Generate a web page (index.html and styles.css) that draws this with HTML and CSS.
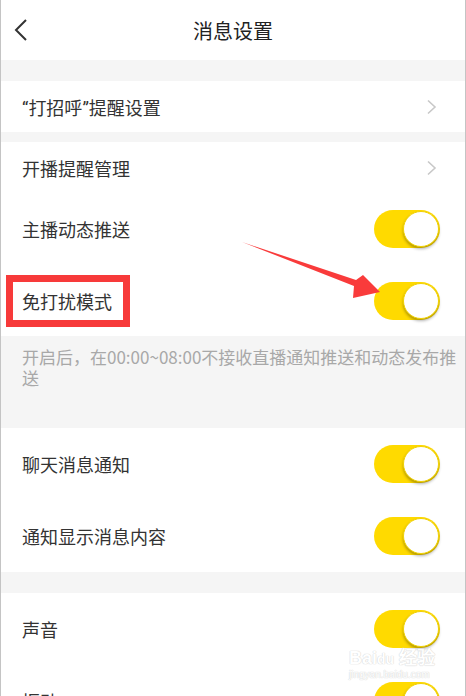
FILE: index.html
```html
<!DOCTYPE html>
<html lang="zh-CN">
<head>
  <meta charset="UTF-8" />
  <meta name="viewport" content="width=device-width, initial-scale=1.0"/>
  <title>消息设置</title>
  <link rel="stylesheet" href="styles.css">
</head>
<body>

  <div class="page">
    <div class="top-bar">
      <svg class="back" width="14" height="24" viewBox="0 0 14 24">
        <polyline points="12,2 2,12 12,22" fill="none" stroke="#333" stroke-width="2"/>
      </svg>
      <h1>消息设置</h1>
    </div>

    <div class="gap gap-top"></div>

    <div class="row row-link">
      <span><span class="q">“</span>打招呼<span class="q">”</span>提醒设置</span>
      <svg class="arrow-right" width="11" height="16" viewBox="0 0 11 16">
        <polyline points="2,1.5 9,8 2,14.5" fill="none" stroke="#c8c8c8" stroke-width="1.6"/>
      </svg>
    </div>

    <div class="gap gap-small"></div>

    <div class="row row-link">
      <span>开播提醒管理</span>
      <svg class="arrow-right" width="11" height="16" viewBox="0 0 11 16">
        <polyline points="2,1.5 9,8 2,14.5" fill="none" stroke="#c8c8c8" stroke-width="1.6"/>
      </svg>
    </div>

    <div class="row">
      <span>主播动态推送</span>
      <div class="switch"><div class="knob"></div></div>
    </div>

    <div class="row row-marked">
      <span>免打扰模式</span>
      <div class="switch"><div class="knob"></div></div>
      <div class="mark-box"></div>
    </div>

    <div class="note">开启后，在00:00~08:00不接收直播通知推送和动态发布推送</div>

    <div class="row">
      <span>聊天消息通知</span>
      <div class="switch"><div class="knob"></div></div>
    </div>

    <div class="row">
      <span>通知显示消息内容</span>
      <div class="switch"><div class="knob"></div></div>
    </div>

    <div class="gap gap-mid"></div>

    <div class="row">
      <span>声音</span>
      <div class="switch"><div class="knob"></div></div>
    </div>

    <div class="row">
      <span>振动</span>
      <div class="switch"><div class="knob"></div></div>
    </div>

    <!-- annotation arrow -->
    <svg class="pointer" width="466" height="696" viewBox="0 0 466 696">
      <polygon points="241,242 355,280 362,275 379,292 352,298 353,286" fill="#f93b3b"/>
    </svg>

    <div class="watermark">
      <div class="wm-logo">Bai<span>du</span> 经验</div>
      <div class="wm-url">jingyan.baidu.com</div>
    </div>
  </div>

</body>
</html>
```

FILE: styles.css
```css
body {
  margin: 0;
  background: #fff;
  font-family: "Noto Sans CJK SC", "Noto Sans", sans-serif;
  color: #333;
  overflow: hidden;
}

.page {
  position: relative;
  width: 464px;
  height: 696px;
  border-left: 1px solid #c4c4c4;
  border-right: 1px solid #c4c4c4;
  overflow: hidden;
}

.top-bar {
  position: relative;
  height: 60px;
  display: flex;
  align-items: center;
  justify-content: center;
}

.top-bar h1 {
  margin: 0;
  font-size: 20px;
  font-weight: 400;
  color: #222;
}

.back {
  position: absolute;
  left: 13px;
  top: 18px;
}

.gap {
  background: #f5f5f5;
}

.gap-top {
  height: 21px;
}

.gap-small {
  height: 10px;
}

.gap-mid {
  height: 21px;
}

.row {
  position: relative;
  height: 72px;
  display: flex;
  align-items: center;
  justify-content: space-between;
  padding: 0 25px 0 21px;
  font-size: 18px;
}

.row .q {
  font-family: "Roboto", "Noto Sans", sans-serif;
}

.row-link {
  height: 51px;
  padding-right: 28px;
}

.row-marked {
  height: 71px;
}

.switch {
  width: 66px;
  height: 38px;
  border-radius: 19px;
  background: #ffda00;
  display: flex;
  align-items: center;
  justify-content: flex-end;
  padding-right: 1px;
  box-sizing: border-box;
}

.knob {
  width: 34px;
  height: 34px;
  border-radius: 50%;
  background: #fff;
  border: 1px solid #f2d200;
  box-shadow: 0 2px 3px rgba(0, 0, 0, 0.3);
}

.mark-box {
  position: absolute;
  left: 5px;
  top: 10px;
  width: 110px;
  height: 38px;
  border: 7px solid #f73a3a;
}

.note {
  background: #f5f5f5;
  height: 92px;
  box-sizing: border-box;
  padding: 10px 4px 0 21px;
  font-size: 17px;
  line-height: 21px;
  color: #a8a8a8;
}

.pointer {
  position: absolute;
  left: 0;
  top: 0;
  pointer-events: none;
}

.watermark {
  position: absolute;
  left: 348px;
  top: 648px;
  color: #fff;
  text-shadow: 0 0 1px #ccc, 0 0 1px #ccc;
  font-family: "Liberation Sans", sans-serif;
  opacity: 0.85;
}

.wm-logo {
  font-size: 18px;
  font-weight: 700;
  line-height: 20px;
}

.wm-logo span {
  font-size: 14px;
}

.wm-url {
  font-size: 10px;
  line-height: 12px;
}
```
